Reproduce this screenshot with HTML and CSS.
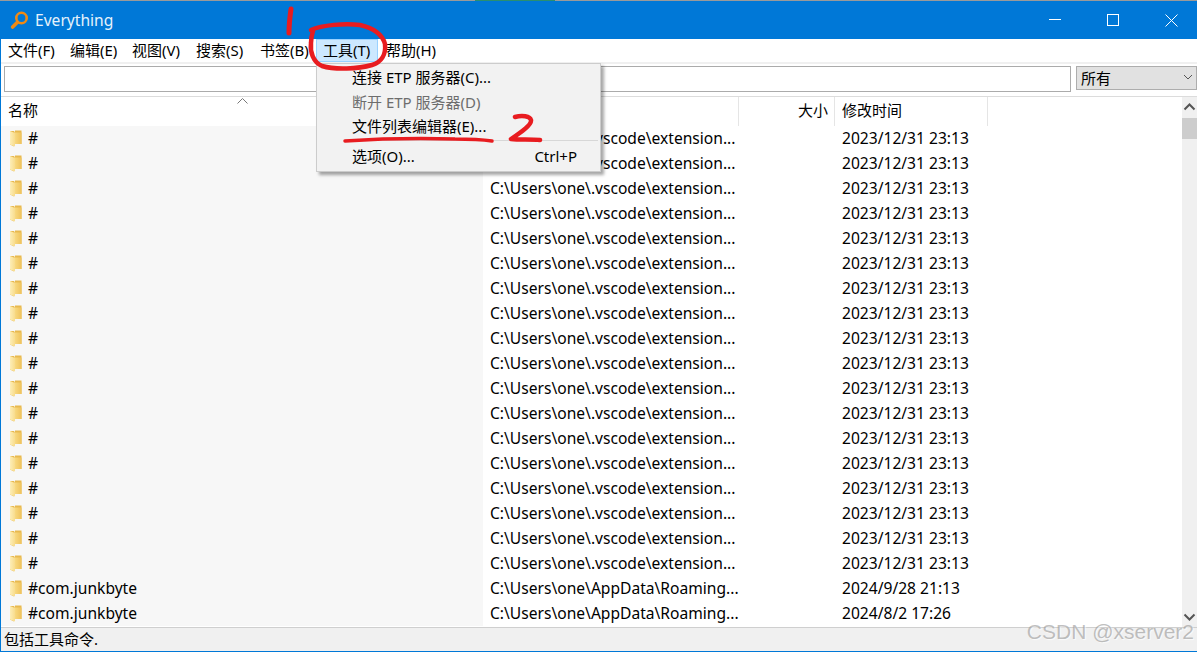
FILE: index.html
```html
<!DOCTYPE html>
<html lang="zh">
<head>
<meta charset="utf-8">
<title>Everything</title>
<link rel="stylesheet" href="styles.css">
</head>
<body>
<svg class="defs" width="0" height="0">
  <defs>
    <linearGradient id="fg" x1="0" y1="0" x2="1" y2="0">
      <stop offset="0" stop-color="#fdeeb8"/>
      <stop offset="1" stop-color="#f8dc8c"/>
    </linearGradient>
    <linearGradient id="fb" x1="0" y1="0" x2="1" y2="0">
      <stop offset="0" stop-color="#f9dc86"/>
      <stop offset="1" stop-color="#efc25a"/>
    </linearGradient>
    <symbol id="folder" viewBox="0 0 12 17">
      <path d="M0 1 H4 L5 2.5 V0.5 H11.5 V14 H4 V16.5 L0 14.5 Z" fill="#e8b94e"/>
      <path d="M4 2.5 H11.5 V14 H4 Z" fill="url(#fb)"/>
      <path d="M0 1 L5 3 V16.5 L0 14.5 Z" fill="url(#fg)"/>
    </symbol>
  </defs>
</svg>
<div class="window">
  <div class="strip"><span class="strip-mark"></span></div>
  <header class="titlebar">
    <svg class="logo" width="20" height="20" viewBox="0 0 20 20">
      <circle cx="11.5" cy="8" r="5.2" fill="none" stroke="#f08a14" stroke-width="2.6"/>
      <path d="M7.4 12.2 L2.6 17" stroke="#f08a14" stroke-width="3.6" stroke-linecap="round"/>
    </svg>
    <span class="title">Everything</span>
    <div class="controls">
      <svg width="12" height="12" viewBox="0 0 12 12"><path d="M0 5.5 H12" stroke="#fff"/></svg>
      <svg width="12" height="12" viewBox="0 0 12 12"><rect x=".5" y=".5" width="11" height="11" fill="none" stroke="#fff"/></svg>
      <svg width="13" height="13" viewBox="0 0 13 13"><path d="M.5 .5 L12.5 12.5 M12.5 .5 L.5 12.5" stroke="#fff"/></svg>
    </div>
  </header>
  <nav class="menubar">
    <span class="menu-item">文件(F)</span>
    <span class="menu-item">编辑(E)</span>
    <span class="menu-item">视图(V)</span>
    <span class="menu-item">搜索(S)</span>
    <span class="menu-item">书签(B)</span>
    <span class="menu-item is-open">工具(T)</span>
    <span class="menu-item">帮助(H)</span>
  </nav>
  <div class="searchbar">
    <input class="search" type="text" aria-label="搜索">
    <div class="filter"><span>所有</span>
      <svg width="12" height="7" viewBox="0 0 12 7"><path d="M2 1 L6 5 L10 1" fill="none" stroke="#555"/></svg>
    </div>
  </div>
  <div class="results">
    <div class="list">
      <div class="head">
        <div class="hc hc-name">名称<svg class="sort" width="11" height="6" viewBox="0 0 11 6"><path d="M.5 5.5 L5.5 .5 L10.5 5.5" fill="none" stroke="#777"/></svg></div>
        <div class="hc hc-path"></div>
        <div class="hc hc-size">大小</div>
        <div class="hc hc-date">修改时间</div>
      </div>
      <div class="rows">
        <div class="row"><div class="c-name"><svg class="fi" width="12" height="17"><use href="#folder"/></svg>#</div><div class="c-path">C:\Users\one\.vscode\extension...</div><div class="c-size"></div><div class="c-date">2023/12/31 23:13</div></div>
        <div class="row"><div class="c-name"><svg class="fi" width="12" height="17"><use href="#folder"/></svg>#</div><div class="c-path">C:\Users\one\.vscode\extension...</div><div class="c-size"></div><div class="c-date">2023/12/31 23:13</div></div>
        <div class="row"><div class="c-name"><svg class="fi" width="12" height="17"><use href="#folder"/></svg>#</div><div class="c-path">C:\Users\one\.vscode\extension...</div><div class="c-size"></div><div class="c-date">2023/12/31 23:13</div></div>
        <div class="row"><div class="c-name"><svg class="fi" width="12" height="17"><use href="#folder"/></svg>#</div><div class="c-path">C:\Users\one\.vscode\extension...</div><div class="c-size"></div><div class="c-date">2023/12/31 23:13</div></div>
        <div class="row"><div class="c-name"><svg class="fi" width="12" height="17"><use href="#folder"/></svg>#</div><div class="c-path">C:\Users\one\.vscode\extension...</div><div class="c-size"></div><div class="c-date">2023/12/31 23:13</div></div>
        <div class="row"><div class="c-name"><svg class="fi" width="12" height="17"><use href="#folder"/></svg>#</div><div class="c-path">C:\Users\one\.vscode\extension...</div><div class="c-size"></div><div class="c-date">2023/12/31 23:13</div></div>
        <div class="row"><div class="c-name"><svg class="fi" width="12" height="17"><use href="#folder"/></svg>#</div><div class="c-path">C:\Users\one\.vscode\extension...</div><div class="c-size"></div><div class="c-date">2023/12/31 23:13</div></div>
        <div class="row"><div class="c-name"><svg class="fi" width="12" height="17"><use href="#folder"/></svg>#</div><div class="c-path">C:\Users\one\.vscode\extension...</div><div class="c-size"></div><div class="c-date">2023/12/31 23:13</div></div>
        <div class="row"><div class="c-name"><svg class="fi" width="12" height="17"><use href="#folder"/></svg>#</div><div class="c-path">C:\Users\one\.vscode\extension...</div><div class="c-size"></div><div class="c-date">2023/12/31 23:13</div></div>
        <div class="row"><div class="c-name"><svg class="fi" width="12" height="17"><use href="#folder"/></svg>#</div><div class="c-path">C:\Users\one\.vscode\extension...</div><div class="c-size"></div><div class="c-date">2023/12/31 23:13</div></div>
        <div class="row"><div class="c-name"><svg class="fi" width="12" height="17"><use href="#folder"/></svg>#</div><div class="c-path">C:\Users\one\.vscode\extension...</div><div class="c-size"></div><div class="c-date">2023/12/31 23:13</div></div>
        <div class="row"><div class="c-name"><svg class="fi" width="12" height="17"><use href="#folder"/></svg>#</div><div class="c-path">C:\Users\one\.vscode\extension...</div><div class="c-size"></div><div class="c-date">2023/12/31 23:13</div></div>
        <div class="row"><div class="c-name"><svg class="fi" width="12" height="17"><use href="#folder"/></svg>#</div><div class="c-path">C:\Users\one\.vscode\extension...</div><div class="c-size"></div><div class="c-date">2023/12/31 23:13</div></div>
        <div class="row"><div class="c-name"><svg class="fi" width="12" height="17"><use href="#folder"/></svg>#</div><div class="c-path">C:\Users\one\.vscode\extension...</div><div class="c-size"></div><div class="c-date">2023/12/31 23:13</div></div>
        <div class="row"><div class="c-name"><svg class="fi" width="12" height="17"><use href="#folder"/></svg>#</div><div class="c-path">C:\Users\one\.vscode\extension...</div><div class="c-size"></div><div class="c-date">2023/12/31 23:13</div></div>
        <div class="row"><div class="c-name"><svg class="fi" width="12" height="17"><use href="#folder"/></svg>#</div><div class="c-path">C:\Users\one\.vscode\extension...</div><div class="c-size"></div><div class="c-date">2023/12/31 23:13</div></div>
        <div class="row"><div class="c-name"><svg class="fi" width="12" height="17"><use href="#folder"/></svg>#</div><div class="c-path">C:\Users\one\.vscode\extension...</div><div class="c-size"></div><div class="c-date">2023/12/31 23:13</div></div>
        <div class="row"><div class="c-name"><svg class="fi" width="12" height="17"><use href="#folder"/></svg>#</div><div class="c-path">C:\Users\one\.vscode\extension...</div><div class="c-size"></div><div class="c-date">2023/12/31 23:13</div></div>
        <div class="row"><div class="c-name"><svg class="fi" width="12" height="17"><use href="#folder"/></svg>#com.junkbyte</div><div class="c-path">C:\Users\one\AppData\Roaming...</div><div class="c-size"></div><div class="c-date">2024/9/28 21:13</div></div>
        <div class="row"><div class="c-name"><svg class="fi" width="12" height="17"><use href="#folder"/></svg>#com.junkbyte</div><div class="c-path">C:\Users\one\AppData\Roaming...</div><div class="c-size"></div><div class="c-date">2024/8/2 17:26</div></div>
      </div>
    </div>
    <div class="scrollbar">
      <svg class="arrow" width="15" height="21" viewBox="0 0 15 21"><path d="M2.5 12.5 L7.5 7.5 L12.5 12.5" fill="none" stroke="#555" stroke-width="2"/></svg>
      <div class="thumb"></div>
      <div class="track"></div>
      <svg class="arrow" width="15" height="18" viewBox="0 0 15 18"><path d="M2.5 5.5 L7.5 10.5 L12.5 5.5" fill="none" stroke="#555" stroke-width="2"/></svg>
    </div>
  </div>
  <footer class="status">包括工具命令.</footer>

  <div class="dropdown">
    <div class="dd-item">连接 ETP 服务器(C)...</div>
    <div class="dd-item is-disabled">断开 ETP 服务器(D)</div>
    <div class="dd-item">文件列表编辑器(E)...</div>
    <div class="dd-sep"></div>
    <div class="dd-item"><span>选项(O)...</span><span class="dd-key">Ctrl+P</span></div>
  </div>

  <svg class="marks" width="1197" height="652" viewBox="0 0 1197 652">
    <g fill="none" stroke="#e81c20" stroke-linecap="round" stroke-linejoin="round">
      <path stroke-width="5" d="M291 9 C290 16 289 25 289 33"/>
      <path stroke-width="4.5" d="M311 30 C322 25 345 23 360 25 C373 28 382 33 385 44 C386 54 382 62 372 65 C358 69 335 70 322 66 C313 62 310 52 311 43 C311 38 312 34 313 31"/>
      <path stroke-width="3.5" d="M345 141 C375 139 420 138 455 139 C470 139 485 140 492 141"/>
      <path stroke-width="4.5" d="M515 117 C522 115 530 116 531 120 C532 125 520 133 511 139 C520 140 530 139 540 140"/>
    </g>
  </svg>
  <div class="watermark">CSDN @xserver2</div>
</div>
</body>
</html>
```

FILE: styles.css
```css
* { box-sizing: border-box; }
html, body { margin: 0; padding: 0; height: 100%; overflow: hidden; }
body {
  font-family: "Noto Sans", "Noto Sans CJK SC", sans-serif;
  font-size: 15px;
  color: #000;
  background: #fff;
}
.defs { position: absolute; }
.window {
  position: relative;
  width: 1197px;
  height: 652px;
  display: flex;
  flex-direction: column;
  border-left: 1px solid #0078d7;
  border-bottom: 1px solid #0078d7;
}
.strip { height: 1px; background: #9a9a9a; flex: none; position: relative; margin-left: -1px; }
.strip-mark { display: block; width: 80px; height: 1px; margin-left: 475px; background: #2a8f6f; }
.titlebar {
  height: 38px;
  flex: none;
  margin-left: -1px;
  background: #0078d7;
  color: #fff;
  display: flex;
  align-items: center;
  padding-left: 10px;
}
.logo { flex: none; margin-top: -1px; }
.title { margin-left: 5px; font-size: 15.6px; color: #e6f2fb; }
.controls { margin-left: auto; display: flex; align-items: center; gap: 46px; padding-right: 19px; }
.menubar {
  height: 23px;
  flex: none;
  display: flex;
  align-items: center;
  background: #fff;
  white-space: nowrap;
}
.menu-item {
  height: 23px;
  padding: 0 6px;
  width: 62px;
  flex: none;
  border: 1px solid transparent;
  line-height: 21px;
}
.menu-item:nth-child(3), .menu-item:nth-child(4) { width: 64px; }
.menu-item:nth-child(5) { width: 63px; }
.menu-item.is-open { background: #cce8ff; border-color: #99d1ff; margin-right: 1px; }
.searchbar {
  height: 35px;
  flex: none;
  border-top: 2px solid #f0f0f0;
  border-bottom: 1px solid #dcdcdc;
  padding: 2px 0 0 3px;
  display: flex;
  align-items: flex-start;
  background: #fff;
}
.search {
  width: 1067px;
  height: 26px;
  border: 1px solid #ababab;
  outline: none;
  background: #fff;
  flex: none;
}
.filter {
  margin-left: 5px;
  width: 121px;
  height: 24px;
  background: #e1e1e1;
  border: 1px solid #adadad;
  display: flex;
  align-items: center;
  justify-content: space-between;
  padding: 0 2px 2px 4px;
  flex: none;
}
.results { flex: 1; min-height: 0; display: flex; border-bottom: 1px solid #cfcfcf; }
.list { flex: 1; min-width: 0; display: flex; flex-direction: column; }
.head { height: 29px; flex: none; display: grid; grid-template-columns: 482px 256px 96px 153px; }
.hc { line-height: 27px; padding: 0 7px; border-right: 1px solid #e5e5e5; position: relative; white-space: nowrap; }
.hc-name { border-right: none; }
.hc-size { text-align: right; padding-right: 6px; }
.sort { position: absolute; left: 236px; top: 1px; }
.rows { flex: 1; min-height: 0; }
.row { height: 25px; display: grid; grid-template-columns: 482px 256px 96px 1fr; line-height: 25px; white-space: nowrap; font-size: 15.6px; }
.c-name { background: #f7f7f7; padding-left: 9px; display: flex; align-items: center; gap: 6px; }
.fi { flex: none; margin-top: -1px; }
.c-path { padding-left: 7px; }
.c-date { padding-left: 7px; }
.scrollbar { width: 15px; flex: none; background: #f0f0f0; display: flex; flex-direction: column; }
.arrow { flex: none; display: block; }
.thumb { height: 21px; flex: none; background: #cdcdcd; }
.track { flex: 1; }
.status {
  height: 23px;
  flex: none;
  background: #f0f0f0;
  padding-left: 3px;
  line-height: 23px;
}
.dropdown {
  position: absolute;
  left: 315px;
  top: 63px;
  width: 285px;
  height: 109px;
  background: #f2f2f2;
  border: 1px solid #cccccc;
  box-shadow: 3px 3px 3px rgba(0, 0, 0, .35);
  padding: 1px 2px 0 0;
}
.dd-item {
  height: 24.5px;
  line-height: 25px;
  padding-left: 35px;
  padding-right: 21px;
  display: flex;
  justify-content: space-between;
  white-space: nowrap;
}
.dd-item.is-disabled { color: #6d6d6d; }
.dd-sep { height: 1px; background: #d7d7d7; margin: 1px 0 3px 35px; }
.marks { position: absolute; left: -1px; top: 0; pointer-events: none; }
.watermark {
  position: absolute;
  right: 3px;
  top: 617px;
  font-family: "Liberation Sans", Arial, sans-serif;
  font-size: 21px;
  line-height: 30px;
  color: rgba(150, 150, 150, .6);
  text-shadow: 1px 1px 1px rgba(255, 255, 255, .7);
  white-space: nowrap;
}
```
